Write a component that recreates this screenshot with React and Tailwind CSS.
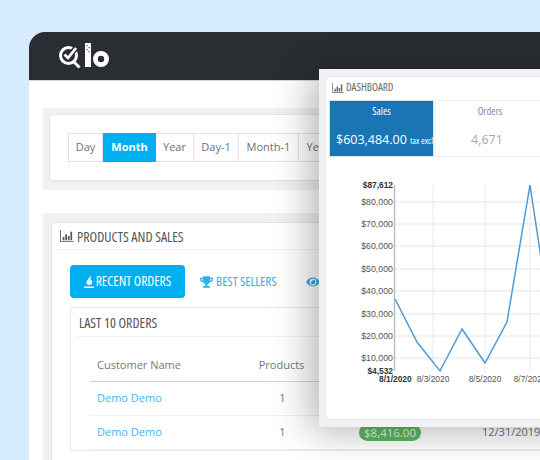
import { FaEye, FaTrophy } from "react-icons/fa"

const openSans = "font-['Open_Sans',sans-serif]"
const condensed = "font-['Open_Sans',sans-serif] [font-stretch:75%]"

function BarsIcon({ className }) {
  return (
    <svg viewBox="0 0 16 14" className={className} fill="currentColor">
      <path d="M0 0h1v13h15v1H0z" />
      <rect x="3" y="8" width="2" height="4" />
      <rect x="6" y="5" width="2" height="7" />
      <rect x="9" y="7" width="2" height="5" />
      <rect x="12" y="2" width="2" height="10" />
    </svg>
  )
}

function FlameIcon({ className }) {
  return (
    <svg viewBox="0 0 10 13" className={className} fill="currentColor">
      <path d="M6 0c.4 2-1 3-2 4.200C3 5.400 2.200 6.500 2.600 8c.3 1.200 1.300 2 2.600 2 1.800 0 3-1.300 3-3 0-1-.4-1.800-1-2.500 0 .8-.3 1.300-.8 1.500C6.700 4 7.200 1.500 6 0z" />
      <rect x="0" y="11.500" width="10" height="1.500" />
    </svg>
  )
}

function Logo() {
  return (
    <svg viewBox="0 0 52 26" className="h-[26px] w-[52px]" fill="none">
      <circle cx="10.500" cy="12.500" r="8" stroke="#fff" strokeWidth="3" />
      <path d="M6.500 11.500l3.500 3.500L18.500 4" stroke="#2a2d32" strokeWidth="5.500" />
      <path d="M6.500 11.500l3.500 3.500L18 5" stroke="#fff" strokeWidth="2.800" />
      <path d="M16 19l5.500 5.500" stroke="#fff" strokeWidth="2.800" />
      <rect x="27" y="0" width="6" height="24" fill="#fff" />
      <rect x="28.500" y="2" width="1.200" height="1.200" fill="#555" />
      <rect x="30.500" y="4" width="1.200" height="1.200" fill="#555" />
      <rect x="28.500" y="6" width="1.200" height="1.200" fill="#555" />
      <rect x="30.500" y="8" width="1.200" height="1.200" fill="#555" />
      <circle cx="43" cy="16" r="5.600" stroke="#fff" strokeWidth="4.800" />
    </svg>
  )
}

const ranges = [
  { label: "Day", width: "w-[35px]" },
  { label: "Month", width: "w-[53px]", active: true },
  { label: "Year", width: "w-[38px]" },
  { label: "Day-1", width: "w-[45px]" },
  { label: "Month-1", width: "w-[60px]" },
  { label: "Year-1", width: "w-[49px]" },
]

function RangePanel() {
  return (
    <div className="bg-[#eff1f2] p-[6px] pb-[9px]">
      <div className="h-[67px] rounded border border-[#e2e4e6] bg-white pl-[18px] pt-[18px]">
        <div className="flex h-[29px]">
          {ranges.map((r) => (
            <div
              key={r.label}
              className={
                r.active
                  ? "flex w-[53px] items-center justify-center bg-[#00aff0] text-[11px] font-bold text-white"
                  : `flex ${r.width} items-center justify-center border border-l-0 border-[#e0e3e5] text-[11px] text-[#6c7277] first:border-l`
              }
            >
              {r.label}
            </div>
          ))}
        </div>
      </div>
    </div>
  )
}

function OrderRow({ price, date }) {
  return (
    <div className="flex h-[34px] items-center border-b border-[#eef0f1] text-[11px]">
      <div className="w-[151px] pl-[7px] text-[#45b5ee]">Demo Demo</div>
      <div className="w-[83px] text-center text-[#777]">1</div>
      <div className="w-[158px] pl-[35px]">
        {price && <span className="rounded-full bg-[#5eb662] px-[5px] py-[1px] text-[11.500px] text-[#e6f5e6]">{price}</span>}
      </div>
      <div className="whitespace-nowrap text-[#6c7277]">{date}</div>
    </div>
  )
}

function SalesPanel() {
  return (
    <div className="mt-[23px] bg-[#eff1f2] pl-[8px] pt-[9px]">
      <div className="h-[240px] rounded-tl border border-[#e2e4e6] bg-white">
        <div className={`mx-[4px] flex h-[27px] items-center gap-[2px] border-b border-[#eef0f1] pl-[3px] text-[14px] text-[#555] ${condensed}`}>
          <BarsIcon className="h-[12px] w-[16px]" />
          PRODUCTS AND SALES
        </div>
        <div className="pl-[18px] pt-[15px]">
          <div className={`flex items-center text-[13.500px] ${condensed}`}>
            <div className="flex h-[33px] w-[115px] items-center justify-center gap-[2px] rounded bg-[#00aff0] text-white">
              <FlameIcon className="h-[13px] w-[10px]" />
              RECENT ORDERS
            </div>
            <div className="ml-[15px] flex items-center gap-[3px] text-[13px] text-[#2eb0ef]">
              <FaTrophy className="h-[12px] w-[13px]" />
              BEST SELLERS
            </div>
            <div className="ml-[29px] flex items-center gap-[3px] text-[13px] text-[#2eb0ef]">
              <FaEye className="h-[12px] w-[14px]" />
              MOST VIEWED
            </div>
          </div>
          <div className="mt-[9px] border border-r-0 border-[#e6e8ea] pl-[5px]">
            <div className={`mx-[3px] flex h-[28px] items-center text-[14px] text-[#555] ${condensed}`}>
              LAST 10 ORDERS
            </div>
            <div className="border-t border-[#eef0f1] pl-[14px] pt-[20px]">
              <div className="flex h-[25px] items-start border-b border-[#b4dcf5] text-[11px] text-[#777]">
                <div className="w-[151px] pl-[7px]">Customer Name</div>
                <div className="w-[81px] text-center">Products</div>
              </div>
              <OrderRow />
              <OrderRow price="$8,416.00" date="12/31/2019" />
            </div>
          </div>
        </div>
      </div>
    </div>
  )
}

const yTicks = [
  ["$80,000", 202],
  ["$70,000", 224],
  ["$60,000", 246],
  ["$50,000", 269],
  ["$40,000", 291],
  ["$30,000", 314],
  ["$20,000", 336],
  ["$10,000", 358],
]
const xTicks = [
  ["8/3/2020", 433],
  ["8/5/2020", 485],
  ["8/7/2020", 530],
]
const points = "395,299 417,342 440,371 462,329 485,363 507,322 530,185 541,258"

// chart is drawn in page coordinates, viewBox starts at the panel's corner
function SalesChart() {
  return (
    <svg viewBox="326 176 214 214" className="mt-[19px] h-[214px] w-[214px] font-['Liberation_Sans',sans-serif]">
      {yTicks.map(([label, y]) => (
        <g key={label}>
          <line x1="394" x2="540" y1={y} y2={y} stroke="#eeeeee" strokeWidth="1.300" />
          <text x="393" y={y + 3} textAnchor="end" fontSize="8.800" fill="#555">{label}</text>
        </g>
      ))}
      {xTicks.map(([label, x]) => (
        <g key={label}>
          <line x1={x} x2={x} y1="185" y2="371" stroke="#eeeeee" strokeWidth="1.300" />
          <text x={x} y="382" textAnchor="middle" fontSize="8.400" fill="#555">{label}</text>
        </g>
      ))}
      <line x1="394.500" x2="394.500" y1="185" y2="371" stroke="#bdbdbd" strokeWidth="1.500" />
      <text x="393" y="188" textAnchor="end" fontSize="8.400" fontWeight="700" fill="#333">$87,612</text>
      <text x="393" y="374" textAnchor="end" fontSize="8.400" fontWeight="700" fill="#333">$4,532</text>
      <text x="379" y="382" textAnchor="start" fontSize="8.400" fontWeight="700" fill="#333">8/1/2020</text>
      <polyline points={points} fill="none" stroke="#4f9ad4" strokeWidth="1.500" />
    </svg>
  )
}

function Dashboard() {
  return (
    <div className="absolute left-[290px] top-[37px] h-[358px] w-[280px] bg-[#f0f1f3] pl-[6px] pt-[7px] shadow-[-8px_4px_36px_rgba(0,0,0,0.3)]">
      <div className="h-[344px] rounded border border-[#e6e8ea] bg-white">
        <div className={`mb-[2px] flex h-[21px] items-center gap-[2px] pl-[6px] text-[11px] text-[#666] ${condensed}`}>
          <BarsIcon className="h-[10px] w-[12px]" />
          DASHBOARD
        </div>
        <div className="ml-[3px] flex h-[57px]">
          <div className="h-[57px] w-[105px] overflow-hidden border border-[#cfe3f2] bg-[#1a75b5] text-white">
            <div className={`pt-[3px] text-center text-[10.500px] leading-[14px] ${condensed}`}>Sales</div>
            <div className="mt-[13px] whitespace-nowrap pl-[6px] text-[12.500px] leading-[18px]">
              $603,484.00 <span className={`text-[9px] ${condensed}`}>tax excl.</span>
            </div>
          </div>
          <div className="ml-[1px] h-[57px] w-[110px] border border-[#eef0f1] text-[#999]">
            <div className={`pt-[3px] text-center text-[10.500px] leading-[14px] text-[#888] ${condensed}`}>Orders</div>
            <div className="mt-[13px] pl-[35px] text-[12.500px] leading-[18px] text-[#aaa]">4,671</div>
          </div>
        </div>
        <SalesChart />
      </div>
    </div>
  )
}

export default function App() {
  return (
    <div className={`h-[460px] w-[540px] overflow-hidden bg-[#d6ebfd] pl-[29px] pt-[32px] ${openSans}`}>
      <div className="relative h-[460px] w-[560px] overflow-hidden rounded-tl-[16px] bg-white">
        <div className="flex h-[49px] items-center border-b border-[#d5d7d9] bg-[#2a2d32] pl-[29px]">
          <Logo />
        </div>
        <div className="pl-[14px] pt-[27px]">
          <RangePanel />
          <SalesPanel />
        </div>
        <Dashboard />
      </div>
    </div>
  )
}
